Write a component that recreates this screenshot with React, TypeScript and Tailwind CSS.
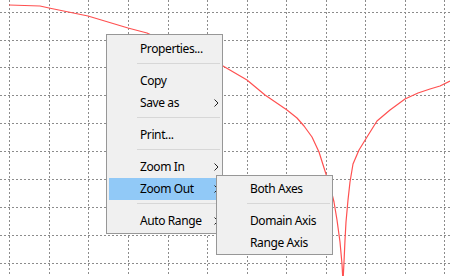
import React from 'react';

const xs = [9, 49, 88, 128, 168, 207, 247, 286, 326, 365, 405, 444];
const ys = [12, 40, 67, 95, 123, 151, 179, 207, 235, 263];

const curve = [
  [9, 5], [40, 6], [49, 8], [88, 16], [128, 28], [147, 33], [168, 43], [190, 52], [207, 58],
  [223, 66], [247, 80], [265, 95], [287, 110], [297, 118], [304, 126], [312, 137], [319, 152],
  [325, 171], [330, 186], [334, 202], [337, 220], [340, 242], [342, 264], [343, 282],
  [344, 262], [345, 240], [346, 222], [348, 200], [350, 182], [353, 164], [359, 150], [367, 137],
  [377, 121], [390, 110], [405, 99], [418, 93], [430, 89], [440, 86], [450, 81],
];

function Chart() {
  return (
    <svg width={450} height={276} className="block">
      <rect width={450} height={276} fill="#ffffff" />
      {xs.map((x) => (
        <line key={'x' + x} x1={x + 0.5} y1={0} x2={x + 0.5} y2={276} stroke="#8c8c8c" strokeWidth={1} strokeDasharray="2 2" />
      ))}
      {ys.map((y) => (
        <line key={'y' + y} x1={0} y1={y + 0.5} x2={450} y2={y + 0.5} stroke="#8c8c8c" strokeWidth={1} strokeDasharray="2 2" />
      ))}
      <polyline points={curve.map((p) => p.join(',')).join(' ')} fill="none" stroke="#ff5050" strokeWidth={1.2} strokeLinejoin="round" />
    </svg>
  );
}

function Chevron() {
  return (
    <svg width={5} height={8} viewBox="0 0 5 8" className="block">
      <polyline points="0.5,0.5 4,4 0.5,7.5" fill="none" stroke="#222" strokeWidth={1} />
    </svg>
  );
}

function Item({ label, sub, active }: { label: string; sub?: boolean; active?: boolean }) {
  return (
    <div className={`mx-[2px] h-[22px] flex items-center justify-between pl-[31px] pr-[1px] ${active ? 'bg-[#91c9f7]' : ''}`}>
      <span className="tracking-[-0.4px]">{label}</span>
      {sub && <Chevron />}
    </div>
  );
}

function Sep() {
  return (
    <div className="h-[10px] pt-[3px] pl-[30px] pr-[2px]">
      <div className="h-px bg-[#d7d7d7]" />
    </div>
  );
}

export default function App() {
  return (
    <div className="relative w-[450px] h-[276px] overflow-hidden bg-white text-[12px] leading-[22px] text-black" style={{ fontFamily: '"Noto Sans", "Open Sans", sans-serif' }}>
      <Chart />

      {/* main popup */}
      <div className="absolute left-[106px] top-[34px] w-[117px] bg-[#f0f0f0] border border-[#979797] pt-[3px] pb-[1px]">
        <Item label="Properties..." />
        <Sep />
        <Item label="Copy" />
        <Item label="Save as" sub />
        <Sep />
        <Item label="Print..." />
        <Sep />
        <Item label="Zoom In" sub />
        <Item label="Zoom Out" sub active />
        <Sep />
        <Item label="Auto Range" sub />
      </div>

      {/* submenu */}
      <div className="absolute left-[216px] top-[175px] w-[117px] bg-[#f0f0f0] border border-[#979797] pt-[2px]">
        <Item label="Both Axes" />
        <Sep />
        <Item label="Domain Axis" />
        <Item label="Range Axis" />
      </div>
    </div>
  );
}
